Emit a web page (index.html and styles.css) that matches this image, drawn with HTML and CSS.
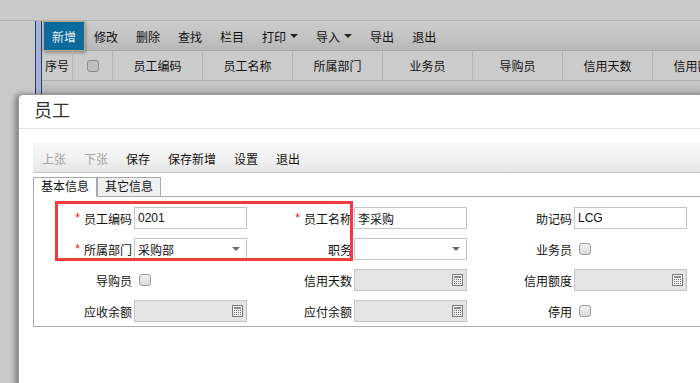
FILE: index.html
```html
<!DOCTYPE html>
<html lang="zh-CN">
<head>
    <meta charset="UTF-8">
    <meta name="viewport" content="width=device-width, initial-scale=1.0">
    <title>员工</title>
    <link rel="stylesheet" href="styles.css">
</head>
<body>

    <!-- list page behind the modal -->
    <div class="topband"></div>
    <div class="main">
        <div class="gutter"></div>
        <div class="bluebar"></div>
        <div class="content">
            <div class="toolbar">
                <span class="tb-btn primary">新增</span>
                <span class="tb-btn">修改</span>
                <span class="tb-btn">删除</span>
                <span class="tb-btn">查找</span>
                <span class="tb-btn">栏目</span>
                <span class="tb-btn">打印<i class="caret"></i></span>
                <span class="tb-btn">导入<i class="caret"></i></span>
                <span class="tb-btn">导出</span>
                <span class="tb-btn">退出</span>
            </div>
            <div class="grid-head">
                <div class="cell c-no">序号</div>
                <div class="cell c-chk"><span class="chk dim"></span></div>
                <div class="cell">员工编码</div>
                <div class="cell">员工名称</div>
                <div class="cell">所属部门</div>
                <div class="cell">业务员</div>
                <div class="cell">导购员</div>
                <div class="cell">信用天数</div>
                <div class="cell">信用额度</div>
            </div>
            <div class="grid-strip"></div>
        </div>
    </div>

    <!-- employee dialog -->
    <div class="dialog">
        <div class="dlg-title">员工</div>
        <div class="dlg-body">
            <div class="dlg-toolbar">
                <span class="tb-btn disabled">上张</span>
                <span class="tb-btn disabled">下张</span>
                <span class="tb-btn">保存</span>
                <span class="tb-btn">保存新增</span>
                <span class="tb-btn">设置</span>
                <span class="tb-btn">退出</span>
            </div>
            <div class="tabs">
                <span class="tab active">基本信息</span>
                <span class="tab">其它信息</span>
            </div>
            <div class="panel">
                <div class="form">
                    <label class="lbl"><em>*</em>员工编码</label>
                    <div class="inp">0201</div>
                    <label class="lbl"><em>*</em>员工名称</label>
                    <div class="inp">李采购</div>
                    <label class="lbl">助记码</label>
                    <div class="inp">LCG</div>

                    <label class="lbl"><em>*</em>所属部门</label>
                    <div class="inp combo">采购部<i class="arrow"></i></div>
                    <label class="lbl">职务</label>
                    <div class="inp combo"><i class="arrow"></i></div>
                    <label class="lbl">业务员</label>
                    <div class="chk-cell"><span class="chk"></span></div>

                    <label class="lbl">导购员</label>
                    <div class="chk-cell"><span class="chk"></span></div>
                    <label class="lbl">信用天数</label>
                    <div class="inp off"><svg class="calc" width="11" height="12" viewBox="0 0 11 12"><rect x="0.5" y="0.5" width="10" height="11" fill="#f4f4f4" stroke="#7a7a7a"/><rect x="2" y="2" width="7" height="2" fill="#8a8a8a"/><g fill="#6a6a6a"><rect x="2" y="5" width="1" height="1"/><rect x="4" y="5" width="1" height="1"/><rect x="6" y="5" width="1" height="1"/><rect x="8" y="5" width="1" height="1"/><rect x="2" y="7" width="1" height="1"/><rect x="4" y="7" width="1" height="1"/><rect x="6" y="7" width="1" height="1"/><rect x="8" y="7" width="1" height="1"/><rect x="2" y="9" width="1" height="1"/><rect x="4" y="9" width="1" height="1"/><rect x="6" y="9" width="1" height="1"/><rect x="8" y="9" width="1" height="1"/></g></svg></div>
                    <label class="lbl">信用额度</label>
                    <div class="inp off"><svg class="calc" width="11" height="12" viewBox="0 0 11 12"><rect x="0.5" y="0.5" width="10" height="11" fill="#f4f4f4" stroke="#7a7a7a"/><rect x="2" y="2" width="7" height="2" fill="#8a8a8a"/><g fill="#6a6a6a"><rect x="2" y="5" width="1" height="1"/><rect x="4" y="5" width="1" height="1"/><rect x="6" y="5" width="1" height="1"/><rect x="8" y="5" width="1" height="1"/><rect x="2" y="7" width="1" height="1"/><rect x="4" y="7" width="1" height="1"/><rect x="6" y="7" width="1" height="1"/><rect x="8" y="7" width="1" height="1"/><rect x="2" y="9" width="1" height="1"/><rect x="4" y="9" width="1" height="1"/><rect x="6" y="9" width="1" height="1"/><rect x="8" y="9" width="1" height="1"/></g></svg></div>

                    <label class="lbl">应收余额</label>
                    <div class="inp off"><svg class="calc" width="11" height="12" viewBox="0 0 11 12"><rect x="0.5" y="0.5" width="10" height="11" fill="#f4f4f4" stroke="#7a7a7a"/><rect x="2" y="2" width="7" height="2" fill="#8a8a8a"/><g fill="#6a6a6a"><rect x="2" y="5" width="1" height="1"/><rect x="4" y="5" width="1" height="1"/><rect x="6" y="5" width="1" height="1"/><rect x="8" y="5" width="1" height="1"/><rect x="2" y="7" width="1" height="1"/><rect x="4" y="7" width="1" height="1"/><rect x="6" y="7" width="1" height="1"/><rect x="8" y="7" width="1" height="1"/><rect x="2" y="9" width="1" height="1"/><rect x="4" y="9" width="1" height="1"/><rect x="6" y="9" width="1" height="1"/><rect x="8" y="9" width="1" height="1"/></g></svg></div>
                    <label class="lbl">应付余额</label>
                    <div class="inp off"><svg class="calc" width="11" height="12" viewBox="0 0 11 12"><rect x="0.5" y="0.5" width="10" height="11" fill="#f4f4f4" stroke="#7a7a7a"/><rect x="2" y="2" width="7" height="2" fill="#8a8a8a"/><g fill="#6a6a6a"><rect x="2" y="5" width="1" height="1"/><rect x="4" y="5" width="1" height="1"/><rect x="6" y="5" width="1" height="1"/><rect x="8" y="5" width="1" height="1"/><rect x="2" y="7" width="1" height="1"/><rect x="4" y="7" width="1" height="1"/><rect x="6" y="7" width="1" height="1"/><rect x="8" y="7" width="1" height="1"/><rect x="2" y="9" width="1" height="1"/><rect x="4" y="9" width="1" height="1"/><rect x="6" y="9" width="1" height="1"/><rect x="8" y="9" width="1" height="1"/></g></svg></div>
                    <label class="lbl">停用</label>
                    <div class="chk-cell"><span class="chk"></span></div>
                </div>
                <div class="mark"></div> <!-- red annotation box -->
            </div>
        </div>
    </div>

</body>
</html>
```

FILE: styles.css
```css
html, body {
    margin: 0;
    padding: 0;
    height: 100%;
    overflow: hidden;
}
body {
    position: relative;
    background: #c9c9c9;
    font-family: "Liberation Sans", "Noto Sans CJK SC", sans-serif;
    font-size: 12px;
    color: #111;
}

/* ---- background list page ---- */
.topband {
    height: 20px;
    border-bottom: 1px solid #b3b3b3;
}
.main {
    display: flex;
    height: 73px;
}
.gutter {
    width: 35px;
}
.bluebar {
    width: 5px;
    background: #a6b3d2;
    border-left: 1px solid #1d3c7c;
    border-right: 1px solid #1d3c7c;
}
.content {
    flex: 1;
    min-width: 0;
}
.toolbar {
    display: flex;
    height: 29px;
    background: linear-gradient(#cbcbcb, #c4c4c4 50%, #b8b8b8);
    border-bottom: 1px solid #a6a6a6;
}
.tb-btn {
    display: flex;
    align-items: center;
    padding: 1px 9px 0;
    white-space: nowrap;
}
.tb-btn.primary {
    margin-left: 1px;
    padding: 1px 8px 0;
    height: 30px;
    box-sizing: border-box;
    background: #0d6a9e;
    color: #e8eef4;
    border: 1px solid #b9aa7c;
    box-shadow: 1px 2px 3px rgba(0, 0, 0, 0.3);
}
.caret {
    display: inline-block;
    margin-left: 4px;
    border-top: 4px solid #222;
    border-left: 4px solid transparent;
    border-right: 4px solid transparent;
}
.grid-head {
    display: flex;
    height: 29px;
    background: #cbcbcb;
    border-bottom: 1px solid #b3b3b3;
}
.cell {
    flex: none;
    width: 90px;
    box-sizing: border-box;
    border-right: 1px solid #b3b3b3;
    display: flex;
    align-items: center;
    justify-content: center;
    white-space: nowrap;
}
.cell.c-no { width: 31px; }
.cell.c-chk { width: 40px; }
.grid-strip {
    height: 13px;
    background: linear-gradient(#c8c8c8, #b7b7b7);
    border-bottom: 1px solid #999;
}
.chk {
    display: inline-block;
    width: 12px;
    height: 12px;
    box-sizing: border-box;
    border: 1px solid #9c9c9c;
    border-radius: 3px;
    background: linear-gradient(#f2f2f2, #dadada);
}
.chk.dim {
    border-color: #8c8c8c;
    background: #c0c0c0;
}

/* ---- dialog ---- */
.dialog {
    position: absolute;
    left: 18px;
    top: 94px;
    right: -40px;
    bottom: -10px;
    background: #fff;
    border: 1px solid #9a9a9a;
    border-radius: 5px 0 0 0;
    box-shadow: -3px 0 5px rgba(0, 0, 0, 0.35);
}
.dlg-title {
    height: 33px;
    line-height: 33px;
    padding-left: 15px;
    font-size: 18px;
    color: #333;
    border-bottom: 1px solid #e3e3e3;
}
.dlg-body {
    padding: 14px 0 0 14px;
}
.dlg-toolbar {
    display: flex;
    height: 29px;
    background: linear-gradient(#f7f7f7, #f2f2f2 50%, #e6e6e6);
    border-bottom: 1px solid #c6c6c6;
}
.tb-btn.disabled {
    color: #a3a3a3;
}
.tabs {
    display: flex;
    margin-top: 4px;
    position: relative;
    z-index: 1;
}
.tab {
    width: 64px;
    height: 20px;
    box-sizing: border-box;
    padding-left: 7px;
    line-height: 18px;
    border: 1px solid #a9a9a9;
    background: #f0f0f0;
}
.tab.active {
    background: #fff;
    border-bottom-color: #fff;
}
.panel {
    position: relative;
    margin-top: -1px;
    border: 1px solid #ababab;
    padding: 10px 0 4px;
}
.form {
    display: grid;
    grid-template-columns: 100px 113px 107px 113px 107px 113px;
    grid-auto-rows: 22px;
    row-gap: 9px;
}
.lbl {
    display: flex;
    align-items: center;
    justify-content: flex-end;
    padding-right: 2px;
    white-space: nowrap;
}
.lbl em {
    font-style: normal;
    color: #e01010;
    margin-right: 4px;
}
.inp {
    display: flex;
    align-items: center;
    box-sizing: border-box;
    height: 22px;
    padding: 0 3px;
    border: 1px solid #c4c4c4;
    background: #fff;
    white-space: nowrap;
}
.inp.off {
    background: #e5e5e5;
}
.arrow {
    margin-left: auto;
    margin-right: 3px;
    border-top: 4px solid #6a6a6a;
    border-left: 4px solid transparent;
    border-right: 4px solid transparent;
}
.calc {
    margin-left: auto;
}
.chk-cell {
    display: flex;
    align-items: center;
    padding-left: 5px;
}
.mark {
    position: absolute;
    left: 21px;
    top: 4px;
    width: 298px;
    height: 60px;
    box-sizing: border-box;
    border: 3px solid #f03c3c;
    pointer-events: none;
}
```
